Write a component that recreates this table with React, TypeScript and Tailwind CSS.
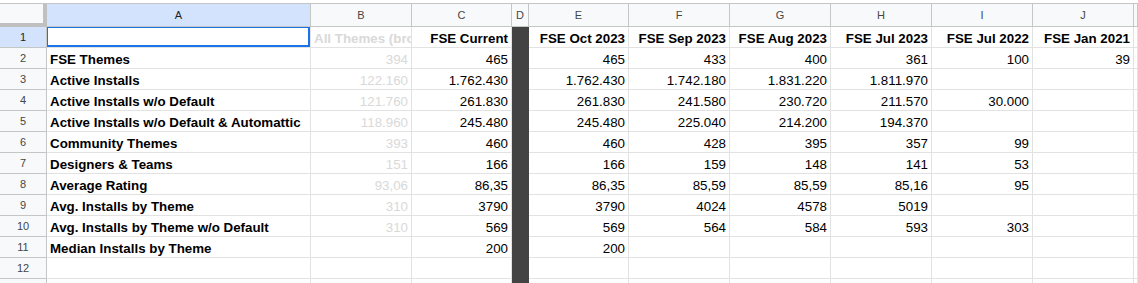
import React from "react";

type Row = {
  label: string;
  b: string;
  values: string[]; // C, E, F, G, H, I, J
};

const headerRow: Row = {
  label: "",
  b: "All Themes (broad)",
  values: [
    "FSE Current",
    "FSE Oct 2023",
    "FSE Sep 2023",
    "FSE Aug 2023",
    "FSE Jul 2023",
    "FSE Jul 2022",
    "FSE Jan 2021",
  ],
};

const rows: Row[] = [
  { label: "FSE Themes", b: "394", values: ["465", "465", "433", "400", "361", "100", "39"] },
  { label: "Active Installs", b: "122.160", values: ["1.762.430", "1.762.430", "1.742.180", "1.831.220", "1.811.970", "", ""] },
  { label: "Active Installs w/o Default", b: "121.760", values: ["261.830", "261.830", "241.580", "230.720", "211.570", "30.000", ""] },
  { label: "Active Installs w/o Default & Automattic", b: "118.960", values: ["245.480", "245.480", "225.040", "214.200", "194.370", "", ""] },
  { label: "Community Themes", b: "393", values: ["460", "460", "428", "395", "357", "99", ""] },
  { label: "Designers & Teams", b: "151", values: ["166", "166", "159", "148", "141", "53", ""] },
  { label: "Average Rating", b: "93,06", values: ["86,35", "86,35", "85,59", "85,59", "85,16", "95", ""] },
  { label: "Avg. Installs by Theme", b: "310", values: ["3790", "3790", "4024", "4578", "5019", "", ""] },
  { label: "Avg. Installs by Theme w/o Default", b: "310", values: ["569", "569", "564", "584", "593", "303", ""] },
  { label: "Median Installs by Theme", b: "", values: ["200", "200", "", "", "", "", ""] },
  { label: "", b: "", values: ["", "", "", "", "", "", ""] },
  { label: "", b: "", values: ["", "", "", "", "", "", ""] },
];

const letters = ["A", "B", "C", "D", "E", "F", "G", "H", "I", "J", ""];

// sheets-style cell: text sits a little low, as in Google Sheets
const cell =
  "h-[21px] pt-px border-r border-b border-[#e2e2e2] bg-white overflow-hidden whitespace-nowrap leading-[21px] text-[13.33px]";

function DataRow({ row, index, bold }: { row: Row; index: number; bold?: boolean }) {
  const selected = index === 1;
  const [c, ...rest] = row.values;
  return (
    <>
      <div
        className={`h-[21px] border-r border-b border-[#c4c7c5] text-center leading-[20px] text-[11px] ${
          selected ? "bg-[#d3e3fd] text-[#1f1f1f]" : "bg-[#f8f9fa] text-[#444746]"
        }`}
      >
        {index}
      </div>
      <div className={`${cell} relative px-[3px] font-bold text-black`}>
        {row.label}
        {selected && (
          <div className="absolute -top-px -left-px right-0 bottom-0 border-2 border-[#1a73e8]" />
        )}
      </div>
      <div
        className={`${cell} px-[3px] text-[#d9d9d9] ${bold ? "font-bold text-left" : "text-right"}`}
      >
        {row.b}
      </div>
      <div className={`${cell} px-[3px] text-black text-right ${bold ? "font-bold" : ""}`}>{c}</div>
      <div className="h-[21px] bg-[#434343]" />
      {rest.map((v, i) => (
        <div
          key={i}
          className={`${cell} px-[3px] text-black text-right ${bold ? "font-bold" : ""}`}
        >
          {v}
        </div>
      ))}
      <div className={cell} />
    </>
  );
}

export default function App() {
  return (
    <div
      className="w-[1138px] h-[283px] overflow-hidden bg-white"
      style={{ fontFamily: '"Liberation Sans", Arial, sans-serif' }}
    >
      <div className="h-[4px] border-b border-[#c4c7c5] bg-white" />
      <div className="grid grid-cols-[47px_264px_101px_100px_17px_100px_101px_101px_101px_101px_101px_1fr]">
        {/* corner with freeze handles */}
        <div className="h-[23px] bg-[#f8f9fa] border-r-4 border-b-4 border-[#c0c0c0]" />
        {letters.map((l, i) => (
          <div
            key={i}
            className={`h-[23px] border-r border-b border-[#c4c7c5] text-center leading-[22px] text-[11px] ${
              l === "A" ? "bg-[#d3e3fd] text-[#1f1f1f]" : "bg-[#f8f9fa] text-[#444746]"
            }`}
          >
            {l}
          </div>
        ))}
        <DataRow row={headerRow} index={1} bold />
        {rows.map((r, i) => (
          <DataRow key={i} row={r} index={i + 2} />
        ))}
      </div>
    </div>
  );
}
